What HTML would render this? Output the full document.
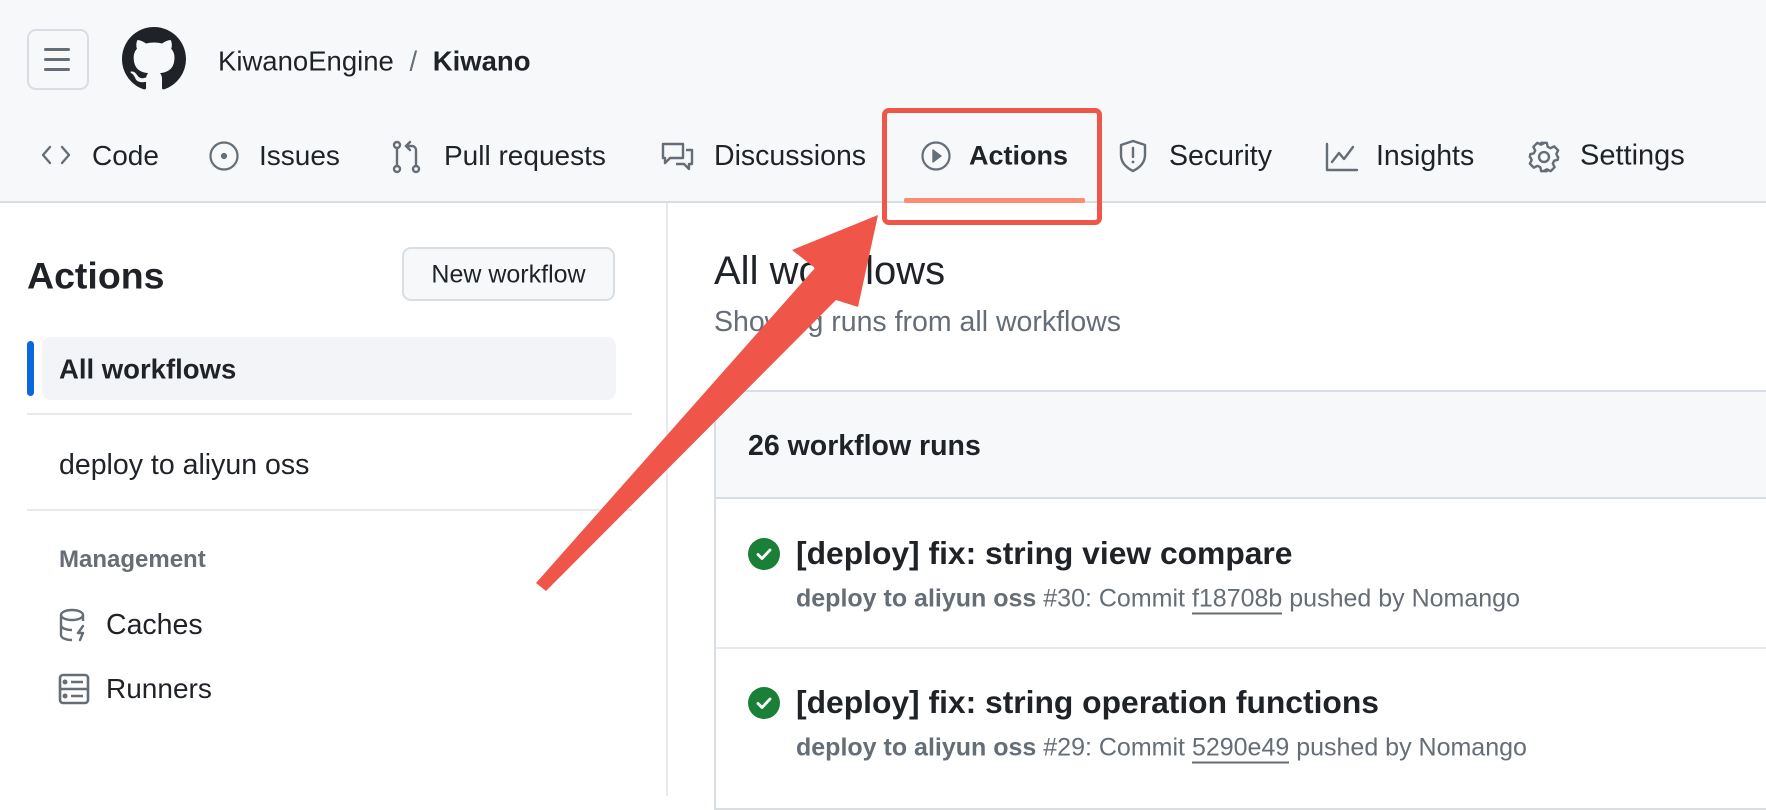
<!DOCTYPE html>
<html><head><meta charset="utf-8"><style>
*{margin:0;padding:0;box-sizing:border-box}
body{width:1766px;height:796px;overflow:hidden;background:#fff;font-family:"Liberation Sans",sans-serif;color:#1f2328;position:relative}
.a{position:absolute;white-space:nowrap}
.t{line-height:1;transform:translateY(-50%)}
svg{position:absolute}
</style></head><body>
<div class="a" style="left:0;top:0;width:1766px;height:203px;background:#f6f8fa;border-bottom:2px solid #d8dee4"></div>
<div class="a" style="left:27px;top:29px;width:62px;height:61px;border:2px solid #d8dee4;border-radius:9px;background:#f6f8fa"></div>
<div class="a" style="left:44px;top:48px;width:26px;height:3px;background:#656d76;border-radius:2px"></div>
<div class="a" style="left:44px;top:58px;width:26px;height:3px;background:#656d76;border-radius:2px"></div>
<div class="a" style="left:44px;top:68px;width:26px;height:3px;background:#656d76;border-radius:2px"></div>
<svg style="left:122px;top:27px" width="64" height="64" viewBox="0 0 16 16"><path fill="#1f2328" d="M8 0C3.58 0 0 3.58 0 8c0 3.54 2.29 6.53 5.47 7.59.4.07.55-.17.55-.38 0-.19-.01-.82-.01-1.49-2.01.37-2.53-.49-2.69-.94-.09-.23-.48-.94-.82-1.13-.28-.15-.68-.52-.01-.53.63-.01 1.08.58 1.23.82.72 1.21 1.87.87 2.33.66.07-.52.28-.87.51-1.07-1.78-.2-3.64-.89-3.64-3.95 0-.87.31-1.59.82-2.15-.08-.2-.36-1.02.08-2.12 0 0 .67-.21 2.2.82.64-.18 1.32-.27 2-.27.68 0 1.36.09 2 .27 1.53-1.04 2.2-.82 2.2-.82.44 1.1.16 1.92.08 2.12.51.56.82 1.27.82 2.15 0 3.07-1.87 3.75-3.65 3.95.29.25.54.73.54 1.48 0 1.07-.01 1.93-.01 2.2 0 .21.15.46.55.38A8.013 8.013 0 0016 8c0-4.42-3.58-8-8-8z"/></svg>
<div class="a t" style="left:218px;top:61px;font-size:27.5px">KiwanoEngine <span style="color:#656d76;margin:0 8px">/</span> <b>Kiwano</b></div>

<!-- tabs -->
<svg style="left:40px;top:142px" width="32" height="26" viewBox="0 0 32 26" fill="none" stroke="#656d76" stroke-width="2.4" stroke-linecap="round" stroke-linejoin="round"><path d="M10 5 3 13l7 8M22 5l7 8-7 8"/></svg>
<div class="a t" style="left:92px;top:156px;font-size:28px">Code</div>
<svg style="left:208px;top:140px" width="32" height="32" viewBox="0 0 32 32" fill="none" stroke="#656d76" stroke-width="2.2"><circle cx="16" cy="16" r="13.5"/><circle cx="16" cy="16" r="2" fill="#656d76"/></svg>
<div class="a t" style="left:259px;top:156px;font-size:28px">Issues</div>
<svg style="left:392px;top:140px" width="30" height="34" viewBox="0 0 30 34" fill="none" stroke="#656d76" stroke-width="2.4" stroke-linecap="round"><circle cx="5" cy="5" r="3"/><circle cx="5" cy="29" r="3"/><circle cx="24" cy="29" r="3"/><path d="M5 8v18M24 26V10a4 4 0 0 0-4-4h-5M18 2l-4 4 4 4"/></svg>
<div class="a t" style="left:444px;top:156px;font-size:28px">Pull requests</div>
<svg style="left:661px;top:141px" width="34" height="32" viewBox="0 0 34 32" fill="none" stroke="#656d76" stroke-width="2.4" stroke-linejoin="round"><path d="M2 3h20v14H9l-5 5v-5H2zM25 9h6v14h-3v5l-5-5h-8"/></svg>
<div class="a t" style="left:714px;top:156px;font-size:28.5px">Discussions</div>
<svg style="left:920px;top:140px" width="32" height="32" viewBox="0 0 32 32" fill="none" stroke="#656d76" stroke-width="2.2"><circle cx="16" cy="16" r="13.5"/><path d="M13 10v12l8-6z" fill="#656d76" stroke-width="1.4" stroke-linejoin="round"/></svg>
<div class="a t" style="left:969px;top:156px;font-size:27px;font-weight:bold">Actions</div>
<div class="a" style="left:904px;top:198px;width:181px;height:5px;background:#fd8c73;border-radius:2px"></div>
<svg style="left:1118px;top:139px" width="30" height="34" viewBox="0 0 30 34" fill="none" stroke="#656d76" stroke-width="2.4" stroke-linejoin="round"><path d="M15 2 3 6v10c0 8 6 13 12 16 6-3 12-8 12-16V6z"/><path d="M15 9v9" stroke-linecap="round"/><circle cx="15" cy="23" r="1.4" fill="#656d76" stroke="none"/></svg>
<div class="a t" style="left:1169px;top:156px;font-size:28.5px">Security</div>
<svg style="left:1325px;top:142px" width="34" height="30" viewBox="0 0 34 30" fill="none" stroke="#656d76" stroke-width="2.4" stroke-linejoin="round" stroke-linecap="round"><path d="M2 2v26h30M7 20l7-9 5 6 9-12"/></svg>
<div class="a t" style="left:1376px;top:156px;font-size:28.5px">Insights</div>
<svg style="left:1527px;top:140px" width="34" height="34" viewBox="0 0 24 24" fill="none" stroke="#656d76" stroke-width="1.7" stroke-linejoin="round"><path d="M10 2h4l.6 2.8 2 1 2.6-1.3 2.8 2.8-1.3 2.6 1 2L22 12v0l-.3 2-2.5.6-1 2 1.3 2.6-2.8 2.8-2.6-1.3-2 1L14 22h-4l-.6-2.8-2-1-2.6 1.3L2 16.7l1.3-2.6-1-2L2 12l.3-2 2.5-.6 1-2L4.5 4.8l2.8-2.8 2.6 1.3 2-1z"/><circle cx="12" cy="12" r="3.5"/></svg>
<div class="a t" style="left:1580px;top:156px;font-size:29px">Settings</div>

<!-- sidebar -->
<div class="a" style="left:666px;top:203px;width:2px;height:593px;background:#e6e9ed"></div>
<div class="a t" style="left:27px;top:276px;font-size:37.5px;font-weight:bold">Actions</div>
<div class="a" style="left:402px;top:247px;width:213px;height:54px;border:2px solid #d8dee4;border-radius:9px;background:#f6f8fa"></div>
<div class="a t" style="left:402px;width:213px;text-align:center;top:275px;font-size:25px">New workflow</div>
<div class="a" style="left:42px;top:337px;width:574px;height:63px;background:#f2f4f7;border-radius:9px"></div>
<div class="a" style="left:27px;top:341px;width:7px;height:55px;background:#0969da;border-radius:4px"></div>
<div class="a t" style="left:59px;top:369px;font-size:27.5px;font-weight:bold">All workflows</div>
<div class="a" style="left:27px;top:413px;width:605px;height:2px;background:#e6e9ed"></div>
<div class="a t" style="left:59px;top:465px;font-size:28.5px">deploy to aliyun oss</div>
<div class="a" style="left:27px;top:509px;width:605px;height:2px;background:#e6e9ed"></div>
<div class="a t" style="left:59px;top:560px;font-size:24px;font-weight:bold;color:#656d76">Management</div>
<svg style="left:58px;top:608px" width="32" height="34" viewBox="0 0 32 34" fill="none" stroke="#656d76" stroke-width="2.4" stroke-linejoin="round"><ellipse cx="14" cy="7" rx="11" ry="5"/><path d="M3 7v20c0 3 5 5 11 5M25 7v6M3 17c0 3 5 5 11 5"/><path d="M25 18l-5 7h5l-3 7" stroke-linecap="round"/></svg>
<div class="a t" style="left:106px;top:625px;font-size:28.5px">Caches</div>
<svg style="left:58px;top:673px" width="32" height="32" viewBox="0 0 32 32" fill="none" stroke="#656d76" stroke-width="2.6"><rect x="2" y="2" width="28" height="28" rx="3"/><path d="M2 16h28M13 9h12M13 23h12"/><circle cx="7" cy="9" r="1.2" fill="#656d76"/><circle cx="7" cy="23" r="1.2" fill="#656d76"/></svg>
<div class="a t" style="left:106px;top:689px;font-size:28px">Runners</div>

<!-- main -->
<div class="a t" style="left:714px;top:271px;font-size:40px">All workflows</div>
<div class="a t" style="left:714px;top:322px;font-size:28.5px;color:#656d76">Showing runs from all workflows</div>
<div class="a" style="left:714px;top:390px;width:1060px;height:420px;border:2px solid #d8dee4;border-radius:8px 0 0 0"></div>
<div class="a" style="left:716px;top:392px;width:1050px;height:107px;background:#f6f8fa;border-bottom:2px solid #d8dee4;border-radius:7px 0 0 0"></div>
<div class="a t" style="left:748px;top:446px;font-size:28.5px;font-weight:bold">26 workflow runs</div>
<svg style="left:748px;top:538px" width="32" height="32" viewBox="0 0 32 32"><circle cx="16" cy="16" r="16" fill="#1a7f37"/><path d="M10 16.5l4 4 8-8.5" fill="none" stroke="#fff" stroke-width="2.8" stroke-linecap="round" stroke-linejoin="round"/></svg>
<div class="a t" style="left:796px;top:554px;font-size:31.8px;font-weight:bold">[deploy] fix: string view compare</div>
<div class="a t" style="left:796px;top:599px;font-size:25px;color:#656d76"><b>deploy to aliyun oss</b> #30: Commit <span style="border-bottom:2px solid #656d76">f18708b</span> pushed by Nomango</div>
<div class="a" style="left:716px;top:647px;width:1050px;height:2px;background:#e6e9ed"></div>
<svg style="left:748px;top:687px" width="32" height="32" viewBox="0 0 32 32"><circle cx="16" cy="16" r="16" fill="#1a7f37"/><path d="M10 16.5l4 4 8-8.5" fill="none" stroke="#fff" stroke-width="2.8" stroke-linecap="round" stroke-linejoin="round"/></svg>
<div class="a t" style="left:796px;top:703px;font-size:31.8px;font-weight:bold">[deploy] fix: string operation functions</div>
<div class="a t" style="left:796px;top:748px;font-size:25px;color:#656d76"><b>deploy to aliyun oss</b> #29: Commit <span style="border-bottom:2px solid #656d76">5290e49</span> pushed by Nomango</div>

<!-- annotation -->
<div class="a" style="left:882px;top:108px;width:220px;height:117px;border:5px solid #f0554a;border-radius:7px"></div>
<svg style="left:0;top:0" width="1766" height="796"><polygon fill="#f0554a" points="536,583 546,591 836,300 858,307 878,215 792,250 815,268"/></svg>
</body></html>
